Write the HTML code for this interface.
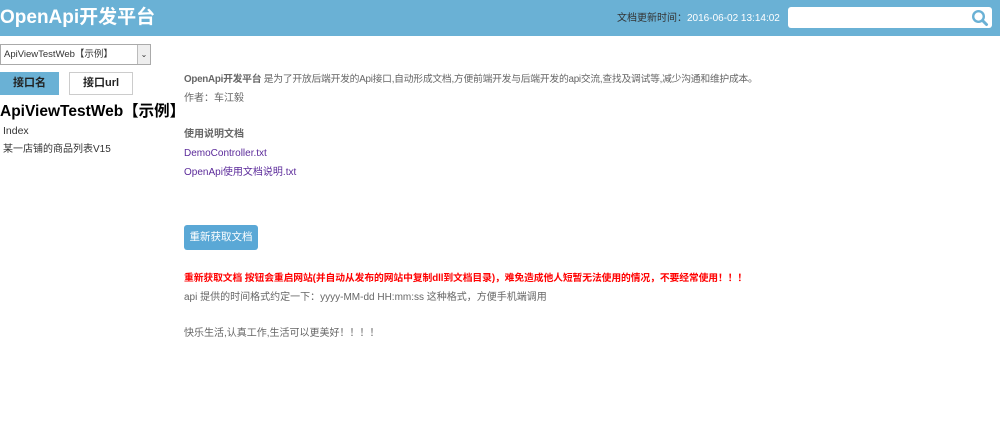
<!DOCTYPE html>
<html><head><meta charset="utf-8"><style>
*{margin:0;padding:0;box-sizing:border-box}
body{width:1000px;height:442px;background:#fff;position:relative;overflow:hidden;font-family:"Liberation Sans","Noto Sans CJK SC",sans-serif;font-size:10px;color:#666}
.a{position:absolute;white-space:nowrap}
#hd{position:absolute;left:0;top:0;width:1000px;height:36px;background:#6ab1d5}
</style></head><body>
<div id="hd"></div>
<div class="a" style="left:0;top:5px;font-size:19px;font-weight:bold;color:#fff;line-height:26px">OpenApi开发平台</div>
<div class="a" style="left:617px;top:12px;font-size:10px;color:#333;line-height:13px">文档更新时间：<span style="color:#fff">2016-06-02 13:14:02</span></div>
<div class="a" style="left:788px;top:7px;width:204px;height:21px;background:#fff;border-radius:3px"></div>
<svg class="a" style="left:971px;top:9px" width="18" height="18" viewBox="0 0 18 18"><circle cx="7.5" cy="7.5" r="5.3" fill="none" stroke="#6ab1d5" stroke-width="2.4"/><path d="M11.5 11.5L15.5 15.5" stroke="#6ab1d5" stroke-width="3" stroke-linecap="round"/></svg>

<div class="a" style="left:0;top:44px;width:151px;height:21px;border:1px solid #aaa;background:#fff"></div>
<div class="a" style="left:4px;top:48px;font-size:9.5px;color:#333;line-height:13px">ApiViewTestWeb【示例】</div>
<div class="a" style="left:137px;top:45px;width:13px;height:19px;background:#eee;border-left:1px solid #bbb;font-size:8px;text-align:center;line-height:19px;color:#333">⌄</div>

<div class="a" style="left:0;top:72px;width:59px;height:23px;background:#6ab1d5;color:#222;font-weight:bold;font-size:11px;text-align:center;line-height:23px">接口名</div>
<div class="a" style="left:69px;top:72px;width:64px;height:23px;border:1px solid #ccc;color:#222;font-weight:bold;font-size:11px;text-align:center;line-height:21px">接口url</div>

<div class="a" style="left:0;top:102px;font-size:15.5px;font-weight:bold;color:#000;line-height:20px">ApiViewTestWeb【示例】</div>
<div class="a" style="left:3px;top:125px;color:#333;line-height:13px;font-size:10.5px">Index</div>
<div class="a" style="left:3px;top:143px;color:#333;line-height:13px;font-size:10px">某一店铺的商品列表V15</div>

<div class="a" style="left:184px;top:73px;line-height:13px;letter-spacing:-0.25px;font-size:9.8px"><b>OpenApi开发平台</b> 是为了开放后端开发的Api接口,自动形成文档,方便前端开发与后端开发的api交流,查找及调试等,减少沟通和维护成本。</div>
<div class="a" style="left:184px;top:92px;line-height:13px">作者：车江毅</div>
<div class="a" style="left:184px;top:128px;line-height:13px;font-weight:bold">使用说明文档</div>
<div class="a" style="left:184px;top:147px;line-height:13px;color:#5b2a9a">DemoController.txt</div>
<div class="a" style="left:184px;top:166px;line-height:13px;color:#5b2a9a">OpenApi使用文档说明.txt</div>

<div class="a" style="left:184px;top:225px;width:74px;height:25px;background:#5aa8d6;border-radius:3px;color:#fff;text-align:center;line-height:25px;font-size:10.5px">重新获取文档</div>

<div class="a" style="left:184px;top:272px;line-height:13px;color:#f00;font-weight:bold;font-size:9.8px;letter-spacing:-0.1px">重新获取文档 按钮会重启网站(并自动从发布的网站中复制dll到文档目录)，难免造成他人短暂无法使用的情况，不要经常使用！！！</div>
<div class="a" style="left:184px;top:291px;line-height:13px">api 提供的时间格式约定一下：yyyy-MM-dd HH:mm:ss 这种格式，方便手机端调用</div>
<div class="a" style="left:184px;top:327px;line-height:13px">快乐生活,认真工作,生活可以更美好！！！！</div>
</body></html>
